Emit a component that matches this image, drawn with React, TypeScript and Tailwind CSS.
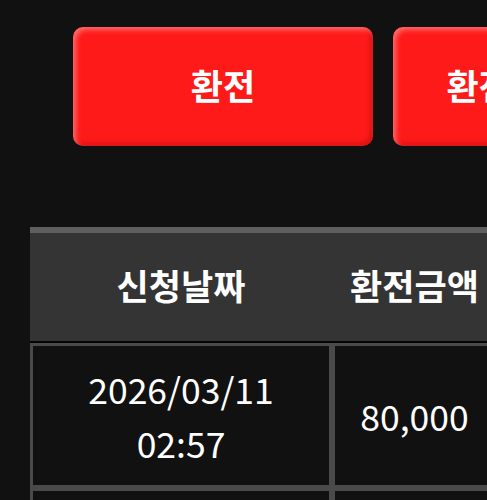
import React from "react";

type Row = {
  date: string;
  time: string;
  amount: string;
};

const rows: Row[] = [
  { date: "2026/03/11", time: "02:57", amount: "80,000" },
  { date: "2026/03/10", time: "21:14", amount: "50,000" },
];

const font = "font-['Noto_Sans_CJK_KR','Noto_Sans',sans-serif]";

const ActionButton: React.FC<{ label: string }> = ({ label }) => (
  <button
    className={`flex h-[119px] w-[300px] shrink-0 items-center justify-center whitespace-nowrap rounded-[10px] bg-[#ff1a1a] pb-[2px] text-[35px] font-bold text-white shadow-[inset_3px_3px_5px_rgba(255,255,255,0.35),inset_-3px_-3px_5px_rgba(120,0,0,0.3)] ${font}`}
  >
    {label}
  </button>
);

export default function App() {
  return (
    <div className={`h-[500px] w-[487px] overflow-hidden bg-[#111111] ${font}`}>
      {/* Top actions */}
      <div className="flex gap-5 pl-[73px] pt-[27px]">
        <ActionButton label="환전" />
        <ActionButton label="환전신청내역" />
      </div>

      {/* History table */}
      <div className="ml-[30px] mt-[81px] w-[800px]">
        <div className="flex h-[114px] border-t-[6px] border-[#5f5f5f] bg-[#343434] text-[35px] font-bold text-white">
          <div className="flex w-[302px] items-center justify-center pb-[4px]">신청날짜</div>
          <div className="flex w-[165px] items-center justify-center pb-[4px]">환전금액</div>
          <div className="flex flex-1 items-center justify-center pb-[4px]">상태</div>
        </div>
        <div className="h-[2px] bg-[#050505]" />
        {rows.map((row, i) => (
          <div key={i} className="flex h-[145px] text-[35.5px] font-normal text-white">
            <div className="flex w-[302px] flex-col items-center justify-center border-[3px] border-[#4a4a4a] leading-[54px]">
              <span>{row.date}</span>
              <span>{row.time}</span>
            </div>
            <div className="flex w-[165px] items-center justify-center border-[3px] border-[#4a4a4a]">
              {row.amount}
            </div>
            <div className="flex flex-1 items-center justify-center border-[3px] border-[#4a4a4a]">
              대기
            </div>
          </div>
        ))}
      </div>
    </div>
  );
}
